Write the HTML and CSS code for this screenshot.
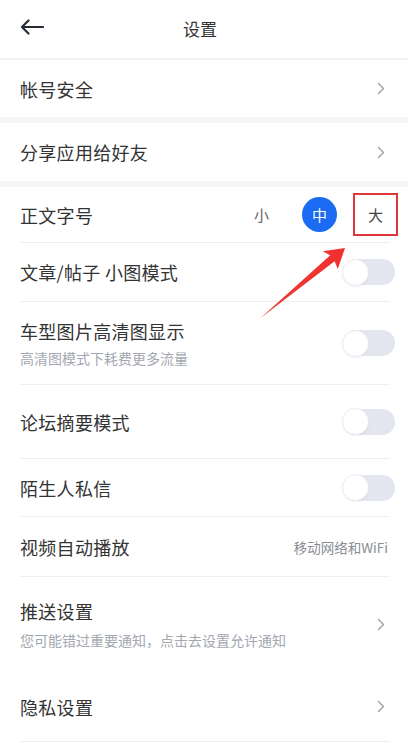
FILE: index.html
```html
<!DOCTYPE html>
<html lang="zh-CN">
<head>
<meta charset="utf-8">
<title>设置</title>
<link rel="stylesheet" href="styles.css">
</head>
<body>
<div class="page">
  <header class="topbar">
    <svg class="back" width="24" height="16" viewBox="0 0 24 16"><path d="M23 8H2M8.5 1.5L2 8l6.5 6.5" fill="none" stroke="#262b36" stroke-width="2.2" stroke-linecap="round" stroke-linejoin="round"/></svg>
    <h1 class="title">设置</h1>
  </header>

  <div class="row row--h57">
    <span class="label">帐号安全</span>
    <svg class="chev" width="8" height="13" viewBox="0 0 8 13"><path d="M1.5 1.5l5 5-5 5" fill="none" stroke="#9a9ea6" stroke-width="1.4" stroke-linecap="round" stroke-linejoin="round"/></svg>
  </div>
  <div class="band"></div>
  <div class="row row--h58">
    <span class="label">分享应用给好友</span>
    <svg class="chev" width="8" height="13" viewBox="0 0 8 13"><path d="M1.5 1.5l5 5-5 5" fill="none" stroke="#9a9ea6" stroke-width="1.4" stroke-linecap="round" stroke-linejoin="round"/></svg>
  </div>
  <div class="band"></div>

  <div class="row row--h56 row--line">
    <span class="label">正文字号</span>
    <div class="sizes">
      <span class="size size--s">小</span>
      <span class="size size--m">中</span>
      <span class="size size--l">大</span>
    </div>
  </div>
  <div class="row row--h59 row--line">
    <span class="label">文章/帖子 小图模式</span>
    <span class="toggle"><span class="knob"></span></span>
  </div>
  <div class="row row--h83 row--line">
    <div class="stack">
      <span class="label">车型图片高清图显示</span>
      <span class="sub">高清图模式下耗费更多流量</span>
    </div>
    <span class="toggle"><span class="knob"></span></span>
  </div>
  <div class="row row--h74 row--line">
    <span class="label">论坛摘要模式</span>
    <span class="toggle"><span class="knob"></span></span>
  </div>
  <div class="row row--h58 row--line">
    <span class="label">陌生人私信</span>
    <span class="toggle"><span class="knob"></span></span>
  </div>
  <div class="row row--h60 row--line">
    <span class="label">视频自动播放</span>
    <span class="value">移动网络和WiFi</span>
  </div>
  <div class="row row--h95">
    <div class="stack stack--push">
      <span class="label">推送设置</span>
      <span class="sub">您可能错过重要通知，点击去设置允许通知</span>
    </div>
    <svg class="chev" width="8" height="13" viewBox="0 0 8 13"><path d="M1.5 1.5l5 5-5 5" fill="none" stroke="#9a9ea6" stroke-width="1.4" stroke-linecap="round" stroke-linejoin="round"/></svg>
  </div>
  <div class="row row--h70 row--line">
    <span class="label">隐私设置</span>
    <svg class="chev" width="8" height="13" viewBox="0 0 8 13"><path d="M1.5 1.5l5 5-5 5" fill="none" stroke="#9a9ea6" stroke-width="1.4" stroke-linecap="round" stroke-linejoin="round"/></svg>
  </div>

  <svg class="pointer" width="408" height="752" viewBox="0 0 408 752">
    <defs>
      <linearGradient id="ag" x1="260" y1="318" x2="345" y2="248" gradientUnits="userSpaceOnUse">
        <stop offset="0" stop-color="#ee3b36"/>
        <stop offset="1" stop-color="#f0302f"/>
      </linearGradient>
    </defs>
    <polygon points="345,248 337.8,269 334.6,261.2 260,318.5 330.2,255.2 322.8,251.2" fill="url(#ag)"/>
  </svg>
</div>
</body>
</html>
```

FILE: styles.css
```css
* { box-sizing: border-box; }
html, body { margin: 0; padding: 0; background: #fff; }
body {
  font-family: "Noto Sans CJK SC", "Noto Sans", "Liberation Sans", sans-serif;
  color: #333;
}
.page {
  position: relative;
  width: 408px;
  min-height: 752px;
  background: #fff;
  overflow: hidden;
}
.topbar {
  height: 60px;
  display: flex;
  align-items: center;
  padding: 0 0 2px 20px;
  border-bottom: 2px solid #f1f2f4;
}
.back { flex: none; margin-top: -2px; }
.title {
  flex: 1;
  margin: 0 0 0 -24px;
  text-align: center;
  font-size: 17px;
  font-weight: 400;
  color: #333;
  padding-right: 28px;
}
.band { height: 6px; background: #f5f6f8; }
.row {
  display: flex;
  align-items: center;
  justify-content: space-between;
  margin: 0 18px 0 20px;
}
.row--line { border-bottom: 1px solid #eeeff1; }
.row--h56 { height: 56px; }
.row--h57 { height: 57px; }
.row--h58 { height: 58px; }
.row--h59 { height: 59px; }
.row--h60 { height: 60px; }
.row--h70 { height: 70px; }
.row--h74 { height: 74px; }
.row--h83 { height: 83px; }
.row--h95 { height: 95px; }
.label {
  font-size: 18px;
  line-height: 24px;
  color: #333;
  letter-spacing: 0.3px;
}
.stack { display: flex; flex-direction: column; }
.stack .sub { margin-top: 6px; }
.stack--push { margin-top: -2px; }
.stack--push .sub { margin-top: 8px; }
.sub {
  font-size: 14px;
  line-height: 18px;
  color: #a3a7b0;
}
.value {
  font-size: 13.5px;
  color: #8a8d94;
  margin-right: 2px;
}
.chev { flex: none; margin-right: 5px; }
.toggle {
  flex: none;
  width: 52px;
  height: 26px;
  border-radius: 13px;
  background: #e3e5ef;
  display: flex;
  align-items: center;
  margin-right: -5px;
}
.knob {
  width: 27px;
  height: 27px;
  border-radius: 50%;
  background: #fff;
  border: 1px solid #ebecf0;
  box-shadow: 0 1px 2px rgba(0,0,0,0.06);
  margin-left: -1px;
}
.sizes {
  display: flex;
  align-items: center;
  margin-right: -8px;
}
.size {
  display: flex;
  align-items: center;
  justify-content: center;
  font-size: 15px;
}
.size--s { width: 35px; color: #666; margin-right: 23px; }
.size--m {
  width: 35px;
  height: 35px;
  border-radius: 50%;
  background: #1b6cf2;
  color: #fff;
  margin-right: 16px;
}
.size--l {
  width: 45px;
  height: 43px;
  border: 2px solid #e0363a;
  color: #444;
}
.pointer {
  position: absolute;
  left: 0;
  top: 0;
  pointer-events: none;
}
```
